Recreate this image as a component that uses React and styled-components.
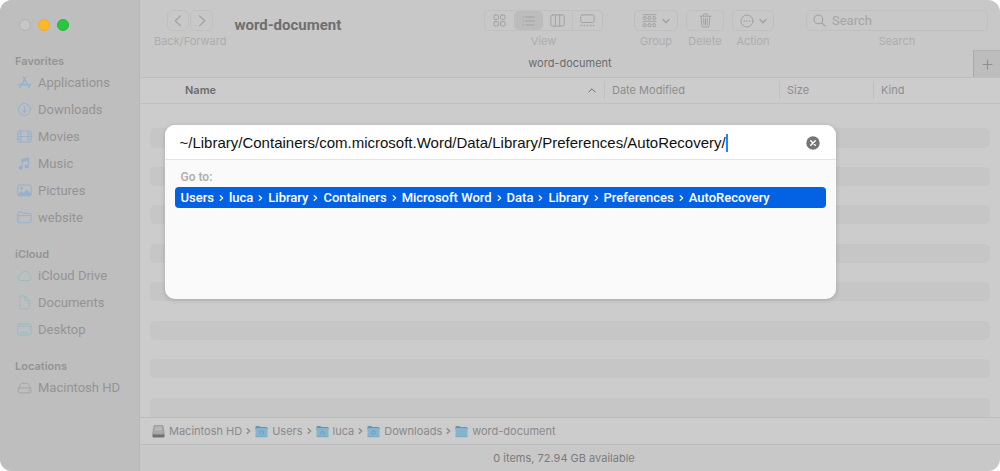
import React, { useState } from "react";
import styled, { createGlobalStyle } from "styled-components";

const GlobalStyle = createGlobalStyle`
  * {
    box-sizing: border-box;
  }

  body {
    margin: 0;
    background: #fff;
    font-family: Inter, "Liberation Sans", sans-serif;
    font-size: 11px;
  }

  button, input {
    font: inherit;
    color: inherit;
    margin: 0;
    padding: 0;
    border: 0;
    background: none;
    outline: 0;
  }
`;

const textFont = `Roboto, "Liberation Sans", sans-serif`;

const Window = styled.div`
  position: relative;
  display: flex;
  min-height: 100vh;
  border-radius: 12px;
  overflow: hidden;
  background: #c8c8c8;
`;

const Sidebar = styled.aside`
  flex: 0 0 140px;
  padding: 19px 0 0;
  background: #bebebe;
  border-right: 1px solid #b7b7b7;
`;

const TrafficLights = styled.div`
  display: flex;
  gap: 7px;
  padding-left: 19px;
  margin-bottom: 22px;
`;

const Light = styled.button`
  width: 12px;
  height: 12px;
  border-radius: 50%;
  background: ${props => props.$color};
  border: 1px solid ${props => props.$edge};
`;

const SidebarSection = styled.section`
  margin-bottom: 15px;
`;

const SidebarHeading = styled.h2`
  margin: 0;
  padding-left: 15px;
  font-size: 11px;
  line-height: 16px;
  font-weight: 600;
  color: #949494;
`;

const SidebarLink = styled.a`
  display: flex;
  align-items: center;
  gap: 6px;
  height: 27px;
  padding-left: 17px;
  font-family: ${textFont};
  font-size: 13px;
  white-space: nowrap;
  text-decoration: none;
  color: #949494;

  svg {
    flex: none;
    color: ${props => props.$tint};
  }
`;

const Main = styled.main`
  flex: 1;
  min-width: 0;
  display: flex;
  flex-direction: column;
`;

const Toolbar = styled.header`
  display: flex;
  align-items: flex-start;
  height: 50px;
  padding: 10px 12px 0 14px;
  color: #a2a2a2;
`;

const ToolGroup = styled.div`
  display: flex;
  flex-direction: column;
  align-items: center;
  margin-right: ${props => props.$after || 0}px;
`;

const SearchGroup = styled.label`
  flex: 0 1 182px;
  min-width: 0;
  display: flex;
  flex-direction: column;
  align-items: center;
`;

const ToolLabel = styled.span`
  font-size: 11px;
  line-height: 20px;
  color: #adadad;
`;

const ToolButtons = styled.div`
  display: flex;
  gap: 1px;
`;

const ToolButton = styled.button`
  display: flex;
  align-items: center;
  justify-content: center;
  gap: 5px;
  width: ${props => props.$width}px;
  height: 21px;
  border: 1px solid #c0c0c0;
  border-radius: 5px;
`;

const Segmented = styled.div`
  display: flex;
  width: 119px;
  height: 21px;
  border: 1px solid #c0c0c0;
  border-radius: 5px;
`;

const Segment = styled.button`
  flex: 1;
  display: flex;
  align-items: center;
  justify-content: center;
  border-radius: ${props => (props.$divided ? 0 : 5)}px;
  border-left: ${props => (props.$divided ? "1px solid #c0c0c0" : "0")};
  background: ${props => (props.$active ? "#bcbcbc" : "none")};
`;

const WindowTitle = styled.h1`
  flex: 1;
  margin: 0;
  font-family: ${textFont};
  font-size: 15px;
  line-height: 31px;
  font-weight: 700;
  color: #6f6f6f;
`;

const SearchBox = styled.span`
  display: flex;
  align-items: center;
  gap: 6px;
  width: 100%;
  height: 21px;
  padding-left: 6px;
  border: 1px solid #c0c0c0;
  border-radius: 5px;
  color: #a0a0a0;

  input {
    flex: 1;
    min-width: 0;
    font-family: ${textFont};
    font-size: 13px;
  }

  input::placeholder {
    color: #a5a5a5;
    opacity: 1;
  }
`;

const TabBar = styled.div`
  display: flex;
  height: 28px;
  border-bottom: 1px solid #bebebe;
`;

const Tab = styled.button`
  flex: 1;
  padding-left: 27px;
  line-height: 27px;
  font-size: 11px;
  color: #6c6c6c;
`;

const NewTab = styled.button`
  display: flex;
  align-items: center;
  justify-content: center;
  width: 27px;
  background: #bdbdbd;
  border-left: 1px solid #aaa;
  border-top: 1px solid #b2b2b2;
  color: #8f8f8f;
`;

const ListArea = styled.div`
  flex: 1;
  display: grid;
  background: #ccc;
`;

const FileTable = styled.table`
  width: 100%;
  height: 100%;
  table-layout: fixed;
  border-collapse: separate;
  border-spacing: 0;
`;

const ColumnHeader = styled.th`
  width: ${props => (props.$width ? `${props.$width}px` : "auto")};
  height: 26px;
  padding: 3px 0 4px;
  border-bottom: 1px solid #c0c0c0;
  text-align: left;
  font-size: 11px;
  font-weight: ${props => (props.$sorted ? 600 : 400)};
  color: ${props => (props.$sorted ? "#6c6c6c" : "#8e8e8e")};
`;

const HeaderInner = styled.div`
  display: flex;
  align-items: center;
  justify-content: space-between;
  height: 18px;
  padding: 0 8px 0 ${props => (props.$first ? 44 : 7)}px;
  border-left: 1px solid ${props => (props.$first ? "transparent" : "#bfbfbf")};
`;

const Row = styled.tr`
  height: 19px;

  &:first-child {
    height: 24px;
  }

  td {
    padding: 0;
    border: solid transparent;
    border-width: 0 10px;
    border-radius: 15px / 5px;
    background-clip: padding-box;
  }

  &:nth-child(even) td {
    background-color: #c6c6c6;
  }

  &:last-child td {
    border-bottom-left-radius: 0;
    border-bottom-right-radius: 0;
  }
`;

const PathBar = styled.nav`
  display: flex;
  align-items: center;
  gap: 4px;
  height: 28px;
  padding: 0 12px;
  background: #ccc;
  border: solid #bcbcbc;
  border-width: 1px 0;
  color: #8a8a8a;
`;

const PathLink = styled.a`
  display: flex;
  align-items: center;
  gap: 4px;
  color: inherit;
  text-decoration: none;
  font-size: 11px;
`;

const StatusBar = styled.footer`
  height: 26px;
  padding-right: 12px;
  line-height: 26px;
  font-size: 11px;
  text-align: center;
  color: #7c7c7c;
`;

const Overlay = styled.div`
  position: absolute;
  inset: 0;
  padding: 125px 24px 0;
`;

const DialogShadow = styled.div`
  max-width: 671px;
  margin: 0 auto;
  border-radius: 10px;
  box-shadow: 0 1px 5px rgba(0, 0, 0, 0.16);
`;

const Dialog = styled.div`
  min-height: 174px;
  border-radius: 10px;
  overflow: hidden;
  background: #fafafa;
`;

const PathField = styled.div`
  display: flex;
  align-items: center;
  height: 35px;
  padding: 1px 16px 0 15px;
  background: #fff;
  border-bottom: 1px solid #e4e4e4;
`;

const PathInput = styled.input`
  field-sizing: content;
  min-width: 0;
  font-family: "Liberation Sans", Arial, sans-serif;
  font-size: 15px;
  line-height: 20px;
  color: #111;
  caret-color: #0a7cff;
`;

const Caret = styled.span`
  width: 2px;
  height: 18px;
  background: #1a86ff;
`;

const ClearButton = styled.button`
  display: flex;
  margin-left: auto;
`;

const GoTo = styled.div`
  padding: 10px 10px 0;
`;

const GoToLabel = styled.div`
  padding: 0 6px;
  font-family: ${textFont};
  font-size: 12px;
  font-weight: 600;
  line-height: 14px;
  color: #b0b0b0;
`;

const Suggestion = styled.button`
  display: flex;
  align-items: center;
  gap: 5px;
  width: 100%;
  height: 21px;
  margin-top: 3px;
  padding: 0 6px;
  border-radius: 4px;
  background: #0362e3;
  color: #fff;
  font-family: ${textFont};
  font-size: 13px;
  font-weight: 500;
  white-space: nowrap;
`;

function Icon({ width = 15, height = 15, stroke = 1, children }) {
  return (
    <svg
      width={width}
      height={height}
      viewBox={`0 0 ${width} ${height}`}
      fill="none"
      stroke="currentColor"
      strokeWidth={stroke}
      strokeLinecap="round"
      strokeLinejoin="round"
      aria-hidden="true"
    >
      {children}
    </svg>
  );
}

const icons = {
  apps: (
    <Icon stroke={1.4}>
      <path d="M6.3 2.2l4.9 8.4M8.8 2.2L4.2 10M1.5 9.8h7.2M11.1 9.8h2.6M3.4 11.6l-.7 1.1M11.8 11.6l.6 1.1" />
    </Icon>
  ),
  downloads: (
    <Icon>
      <circle cx="7.5" cy="7.5" r="6" />
      <path d="M7.5 4.4v6M5.3 8.4l2.2 2.2 2.2-2.2" />
    </Icon>
  ),
  movies: (
    <Icon>
      <rect x=".8" y="2" width="13.4" height="11" rx="1.4" />
      <path d="M3.8 2v11M11.2 2v11M3.8 7.5h7.4M.8 4.8h3M.8 7.5h3M.8 10.2h3M11.2 4.8h3M11.2 7.5h3M11.2 10.2h3" />
    </Icon>
  ),
  music: (
    <Icon stroke={1.2}>
      <path d="M5 11.6V3.6l6.2-1.5v8" />
      <path d="M5 3.7l6.2-1.5v1.9L5 5.6z" fill="currentColor" />
      <ellipse cx="3.5" cy="11.9" rx="1.5" ry="1.3" fill="currentColor" />
      <ellipse cx="9.7" cy="10.5" rx="1.5" ry="1.3" fill="currentColor" />
    </Icon>
  ),
  pictures: (
    <Icon>
      <rect x=".8" y="2" width="13.4" height="11" rx="1.6" />
      <circle cx="4.5" cy="5.4" r="1" fill="currentColor" />
      <path
        d="M1.2 11.2l3.2-3 2 1.7 3.4-3.4 4 4v1.2q0 1-1 1H2.2q-1 0-1-1z"
        fill="currentColor"
        stroke="none"
      />
    </Icon>
  ),
  folder: (
    <Icon>
      <path d="M.9 11.2V3.4Q.9 2 2.3 2h2.4l1.5 1.3h6.4q1.5 0 1.5 1.4v6.5q0 1.5-1.5 1.5H2.3Q.9 12.7.9 11.2zM.9 5.6h13.2" />
    </Icon>
  ),
  cloud: (
    <Icon>
      <path d="M3.4 12.6h8.4a2.7 2.7 0 0 0 .5-5.3A4.2 4.2 0 0 0 4.4 5.4 2.3 2.3 0 0 0 3 7.5a2.6 2.6 0 0 0 .4 5.1z" />
    </Icon>
  ),
  document: (
    <Icon>
      <path d="M2.8 2.3q0-1.2 1.2-1.2h4l4.4 4.4v7.2q0 1.2-1.2 1.2H4q-1.2 0-1.2-1.2zM8 1.2v3.2q0 1.2 1.2 1.2h3.2" />
    </Icon>
  ),
  desktop: (
    <Icon>
      <rect x=".8" y="2" width="13.4" height="11" rx="1.6" />
      <path d="M.8 4.2h13.4M3.8 10.6h7.4" />
    </Icon>
  ),
  disk: (
    <Icon>
      <path d="M1.2 9.2l2.1-4.8q.5-1.1 1.5-1.1h5.4q1 0 1.5 1.1l2.1 4.8" />
      <rect x="1" y="7.9" width="13" height="4.9" rx="1.8" />
      <path d="M11.5 10.4h.2" />
    </Icon>
  ),
  back: (
    <Icon width={12} height={14} stroke={1.2}>
      <path d="M8.4 2L3.2 6.8l5.2 4.8" />
    </Icon>
  ),
  forward: (
    <Icon width={12} height={14} stroke={1.2}>
      <path d="M3.6 2l5.2 4.8-5.2 4.8" />
    </Icon>
  ),
  grid: (
    <Icon width={13} height={13}>
      <rect x="1" y="1" width="4.4" height="4.4" rx="1" />
      <rect x="7.6" y="1" width="4.4" height="4.4" rx="1" />
      <rect x="1" y="7.6" width="4.4" height="4.4" rx="1" />
      <rect x="7.6" y="7.6" width="4.4" height="4.4" rx="1" />
    </Icon>
  ),
  list: (
    <Icon width={14} height={12}>
      <path d="M4 2h8.5M4 6h8.5M4 10h8.5M1.2 2h.3M1.2 6h.3M1.2 10h.3" />
    </Icon>
  ),
  columns: (
    <Icon width={15} height={13}>
      <rect x=".8" y=".9" width="13.4" height="11.2" rx="1.6" />
      <path d="M5.3 1v11M9.7 1v11" />
    </Icon>
  ),
  gallery: (
    <Icon width={15} height={13}>
      <rect x=".8" y=".9" width="13.4" height="7.6" rx="1.6" />
      <path
        d="M1.2 11.5h.4M4.2 11.5h.4M7.3 11.5h.4M10.4 11.5h.4M13.4 11.5h.4"
        strokeWidth="1.4"
      />
    </Icon>
  ),
  group: (
    <Icon width={15} height={14}>
      <path d="M1 .7h13M1 7.3h13" />
      <rect x="1.2" y="2.7" width="2.9" height="2.7" rx=".9" />
      <rect x="6" y="2.7" width="2.9" height="2.7" rx=".9" />
      <rect x="10.8" y="2.7" width="2.9" height="2.7" rx=".9" />
      <rect x="1.2" y="9.8" width="2.9" height="2.9" rx=".9" />
      <rect x="6" y="9.8" width="2.9" height="2.9" rx=".9" />
      <rect x="10.8" y="9.8" width="2.9" height="2.9" rx=".9" />
    </Icon>
  ),
  trash: (
    <Icon width={13} height={15}>
      <path d="M1 3.2h11M4.4 3V1.9q0-.9.9-.9h2.4q.9 0 .9.9V3M2.2 3.4l.6 9.4q.1 1.2 1.2 1.2h5q1.1 0 1.2-1.2l.6-9.4M4.7 5.4l.2 6.5M6.5 5.4v6.5M8.3 5.4l-.2 6.5" />
    </Icon>
  ),
  action: (
    <Icon width={14} height={14}>
      <circle cx="7" cy="7" r="6" />
      <path d="M4.2 7h.2M6.9 7h.2M9.6 7h.2" strokeWidth="1.5" />
    </Icon>
  ),
  down: (
    <Icon width={8} height={8} stroke={1.4}>
      <path d="M1 2.6l3 3.1 3-3.1" />
    </Icon>
  ),
  sort: (
    <Icon width={8} height={8}>
      <path d="M.8 6L4 2.8 7.2 6" />
    </Icon>
  ),
  search: (
    <Icon width={13} height={13} stroke={1.1}>
      <circle cx="5.4" cy="5.4" r="4.4" />
      <path d="M8.7 8.7l3.5 3.5" />
    </Icon>
  ),
  plus: (
    <Icon width={11} height={11} stroke={1.2}>
      <path d="M5.5 1v9M1 5.5h9" />
    </Icon>
  ),
  clear: (
    <svg width="14" height="14" viewBox="0 0 14 14" aria-hidden="true">
      <circle cx="7" cy="7" r="6.7" fill="#757575" />
      <path
        d="M4.7 4.7l4.6 4.6M9.3 4.7L4.7 9.3"
        stroke="#fff"
        strokeWidth="1.4"
        strokeLinecap="round"
      />
    </svg>
  )
};

function Chevron({ stroke = 1.2 }) {
  return (
    <Icon width={5} height={8} stroke={stroke}>
      <path d="M1.2 1.7L3.7 4 1.2 6.3" />
    </Icon>
  );
}

function DriveIcon() {
  return (
    <svg width="13" height="13" viewBox="0 0 13 13" aria-hidden="true">
      <path d="M2 .6h9l1.4 8.8H.6z" fill="#a6aaab" stroke="#8b8b8b" strokeWidth=".6" />
      <path d="M.5 9.4h12v2.2q0 .8-.8.8H1.3q-.8 0-.8-.8z" fill="#707070" />
      <path d="M3.3 1.6h6.4l.6 4H2.7z" fill="#b3b9ba" />
    </svg>
  );
}

function FolderIcon({ badge }) {
  return (
    <svg width="13" height="13" viewBox="0 0 13 13" aria-hidden="true">
      <path d="M.5 1.9q0-.8.8-.8h3l1 1h6.4q.8 0 .8.8V5H.5z" fill="#6594b0" />
      <rect x=".5" y="3.1" width="12" height="9" rx=".7" fill="#86b4ce" />
      <path d="M.8 11.8h11.4" stroke="#6f9fba" strokeWidth=".6" />
      {badge && <path d={badge} fill="none" stroke="#6b98b3" strokeWidth=".8" />}
    </svg>
  );
}

const BLUE = "#98b0cb";
const TEAL = "#99bbc1";
const GREY = "#a5a5a5";

const sections = [
  {
    title: "Favorites",
    tint: BLUE,
    items: [
      ["Applications", "apps"],
      ["Downloads", "downloads"],
      ["Movies", "movies"],
      ["Music", "music"],
      ["Pictures", "pictures"],
      ["website", "folder"]
    ]
  },
  {
    title: "iCloud",
    tint: TEAL,
    items: [
      ["iCloud Drive", "cloud"],
      ["Documents", "document"],
      ["Desktop", "desktop"]
    ]
  },
  { title: "Locations", tint: GREY, items: [["Macintosh HD", "disk"]] }
];

const views = [
  ["Icons", "grid"],
  ["List", "list"],
  ["Columns", "columns"],
  ["Gallery", "gallery"]
];

const columns = [
  { name: "Name" },
  { name: "Date Modified", width: 175 },
  { name: "Size", width: 94 },
  { name: "Kind", width: 127 }
];

const location = [
  { name: "Macintosh HD", icon: <DriveIcon /> },
  { name: "Users", icon: <FolderIcon badge="M5.3 9.3a2 2 0 1 1 2.4 0" /> },
  { name: "luca", icon: <FolderIcon badge="M4.9 9.6V7.4l1.6-1.2 1.6 1.2v2.2" /> },
  {
    name: "Downloads",
    icon: <FolderIcon badge="M6.5 5.8a1.8 1.8 0 1 1 0 3.6 1.8 1.8 0 1 1 0-3.6z" />
  },
  { name: "word-document", icon: <FolderIcon /> }
];

const suggestion = [
  "Users",
  "luca",
  "Library",
  "Containers",
  "Microsoft Word",
  "Data",
  "Library",
  "Preferences",
  "AutoRecovery"
];

const rows = Array.from({ length: 16 }, (_, i) => i);

function FinderSidebar() {
  return (
    <Sidebar>
      <TrafficLights>
        <Light aria-label="Close" $color="#c6c6c6" $edge="#b2b2b2" />
        <Light aria-label="Minimize" $color="#fdb827" $edge="#f2ae27" />
        <Light aria-label="Zoom" $color="#27c73f" $edge="#24b939" />
      </TrafficLights>
      {sections.map(section => (
        <SidebarSection key={section.title}>
          <SidebarHeading>{section.title}</SidebarHeading>
          {section.items.map(([name, icon]) => (
            <SidebarLink key={name} href="#" $tint={section.tint}>
              {icons[icon]}
              {name}
            </SidebarLink>
          ))}
        </SidebarSection>
      ))}
    </Sidebar>
  );
}

function FinderToolbar() {
  const [view, setView] = useState("List");

  return (
    <Toolbar>
      <ToolGroup $after={8}>
        <ToolButtons>
          <ToolButton $width={22} aria-label="Back">{icons.back}</ToolButton>
          <ToolButton $width={23} aria-label="Forward">{icons.forward}</ToolButton>
        </ToolButtons>
        <ToolLabel>Back/Forward</ToolLabel>
      </ToolGroup>

      <WindowTitle>word-document</WindowTitle>

      <ToolGroup $after={31}>
        <Segmented>
          {views.map(([name, icon]) => (
            <Segment
              key={name}
              aria-label={name}
              $active={view === name}
              $divided={name === "Gallery"}
              onClick={() => setView(name)}
            >
              {icons[icon]}
            </Segment>
          ))}
        </Segmented>
        <ToolLabel>View</ToolLabel>
      </ToolGroup>
      <ToolGroup $after={8}>
        <ToolButton $width={44} aria-label="Group">
          {icons.group}
          {icons.down}
        </ToolButton>
        <ToolLabel>Group</ToolLabel>
      </ToolGroup>
      <ToolGroup $after={8}>
        <ToolButton $width={38} aria-label="Delete">{icons.trash}</ToolButton>
        <ToolLabel>Delete</ToolLabel>
      </ToolGroup>
      <ToolGroup $after={32}>
        <ToolButton $width={42} aria-label="Action">
          {icons.action}
          {icons.down}
        </ToolButton>
        <ToolLabel>Action</ToolLabel>
      </ToolGroup>
      <SearchGroup>
        <SearchBox>
          {icons.search}
          <input type="search" placeholder="Search" />
        </SearchBox>
        <ToolLabel>Search</ToolLabel>
      </SearchGroup>
    </Toolbar>
  );
}

function FileList() {
  return (
    <ListArea>
      <FileTable>
        <thead>
          <tr>
            {columns.map((column, i) => (
              <ColumnHeader key={column.name} $width={column.width} $sorted={i === 0}>
                <HeaderInner $first={i === 0}>
                  {column.name}
                  {i === 0 && icons.sort}
                </HeaderInner>
              </ColumnHeader>
            ))}
          </tr>
        </thead>
        <tbody>
          {rows.map(row => (
            <Row key={row}>
              <td colSpan={columns.length} />
            </Row>
          ))}
        </tbody>
      </FileTable>
    </ListArea>
  );
}

function GoToFolder() {
  const [path, setPath] = useState(
    "~/Library/Containers/com.microsoft.Word/Data/Library/Preferences/AutoRecovery/"
  );

  return (
    <Overlay>
      <DialogShadow>
        <Dialog role="dialog" aria-label="Go to Folder">
          <PathField>
            <PathInput
              aria-label="Folder path"
              value={path}
              spellCheck={false}
              onChange={event => setPath(event.target.value)}
            />
            <Caret />
            <ClearButton aria-label="Clear" onClick={() => setPath("")}>
              {icons.clear}
            </ClearButton>
          </PathField>
          <GoTo>
            <GoToLabel>Go to:</GoToLabel>
            <Suggestion>
              {suggestion.map((name, i) => (
                <React.Fragment key={i}>
                  {i > 0 && <Chevron />}
                  <span>{name}</span>
                </React.Fragment>
              ))}
            </Suggestion>
          </GoTo>
        </Dialog>
      </DialogShadow>
    </Overlay>
  );
}

export default function App() {
  return (
    <>
      <GlobalStyle />
      <Window>
        <FinderSidebar />
        <Main>
          <FinderToolbar />
          <TabBar>
            <Tab>word-document</Tab>
            <NewTab aria-label="New tab">{icons.plus}</NewTab>
          </TabBar>
          <FileList />
          <PathBar>
            {location.map((item, i) => (
              <React.Fragment key={item.name}>
                {i > 0 && <Chevron stroke={1.4} />}
                <PathLink href="#">
                  {item.icon}
                  {item.name}
                </PathLink>
              </React.Fragment>
            ))}
          </PathBar>
          <StatusBar>0 items, 72.94 GB available</StatusBar>
        </Main>
        <GoToFolder />
      </Window>
    </>
  );
}
